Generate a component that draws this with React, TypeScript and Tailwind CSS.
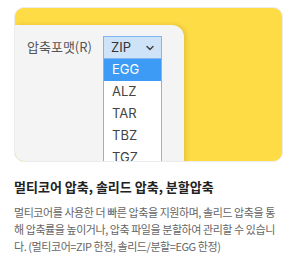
import { ChevronDown } from 'lucide-react'

const formats = ['EGG', 'ALZ', 'TAR', 'TBZ', 'TGZ', 'LZH']

export default function App() {
	return (
		<div className="bg-white w-[300px] h-[264px] pl-[14px] pt-[7px]" style={{ fontFamily: '"Noto Sans CJK KR", "Noto Sans", sans-serif' }}>
			<div className="w-[269px]">
				<div className="relative h-[155px] overflow-hidden rounded-[10px] bg-[#fedc45] border border-[#ececec]">
					<div className="mt-[17px] w-[169px] h-[140px] rounded-tr-[12px] bg-[#f4f4f5] shadow-[2px_0_5px_rgba(0,0,0,0.12)] flex items-start pt-[11px] pl-[12px]">
						<span className="text-[13px] leading-[22px] text-[#555] w-[76px]">압축포맷(R)</span>
						<div className="relative w-[59px]">
							<div className="h-[23px] flex items-center justify-between pl-[7px] pr-[5px] bg-[#cfe3f8] border border-[#7fb6f2] text-[13px] text-[#333]" style={{ fontFamily: 'Inter, sans-serif' }}>
								<span>ZIP</span>
								<ChevronDown size={12} strokeWidth={3} className="text-[#444]" />
							</div>
							<div className="absolute top-[23px] left-0 w-[59px] bg-white border-x border-[#7fb6f2]" style={{ fontFamily: 'Inter, sans-serif' }}>
								{formats.map((f, i) => (
									<div key={f} className={`h-[22px] flex items-center pl-[8px] text-[13px] ${i === 0 ? 'bg-[#3d9bf6] text-white' : 'text-[#444]'}`}>
										{f}
									</div>
								))}
							</div>
						</div>
					</div>
				</div>
				<h2 className="mt-[16px] text-[13px] leading-[18px] font-bold text-[#222]">멀티코어 압축, 솔리드 압축, 분할압축</h2>
				<p className="mt-[8px] text-[11px] leading-[17px] text-[#666] break-all tracking-[-0.04em]">
					멀티코어를 사용한 더 빠른 압축을 지원하며, 솔리드 압축을 통해 압축률을 높이거나, 압축 파일을 분할하여 관리할 수 있습니다. (멀티코어=ZIP 한정, 솔리드/분할=EGG 한정)
				</p>
			</div>
		</div>
	)
}
